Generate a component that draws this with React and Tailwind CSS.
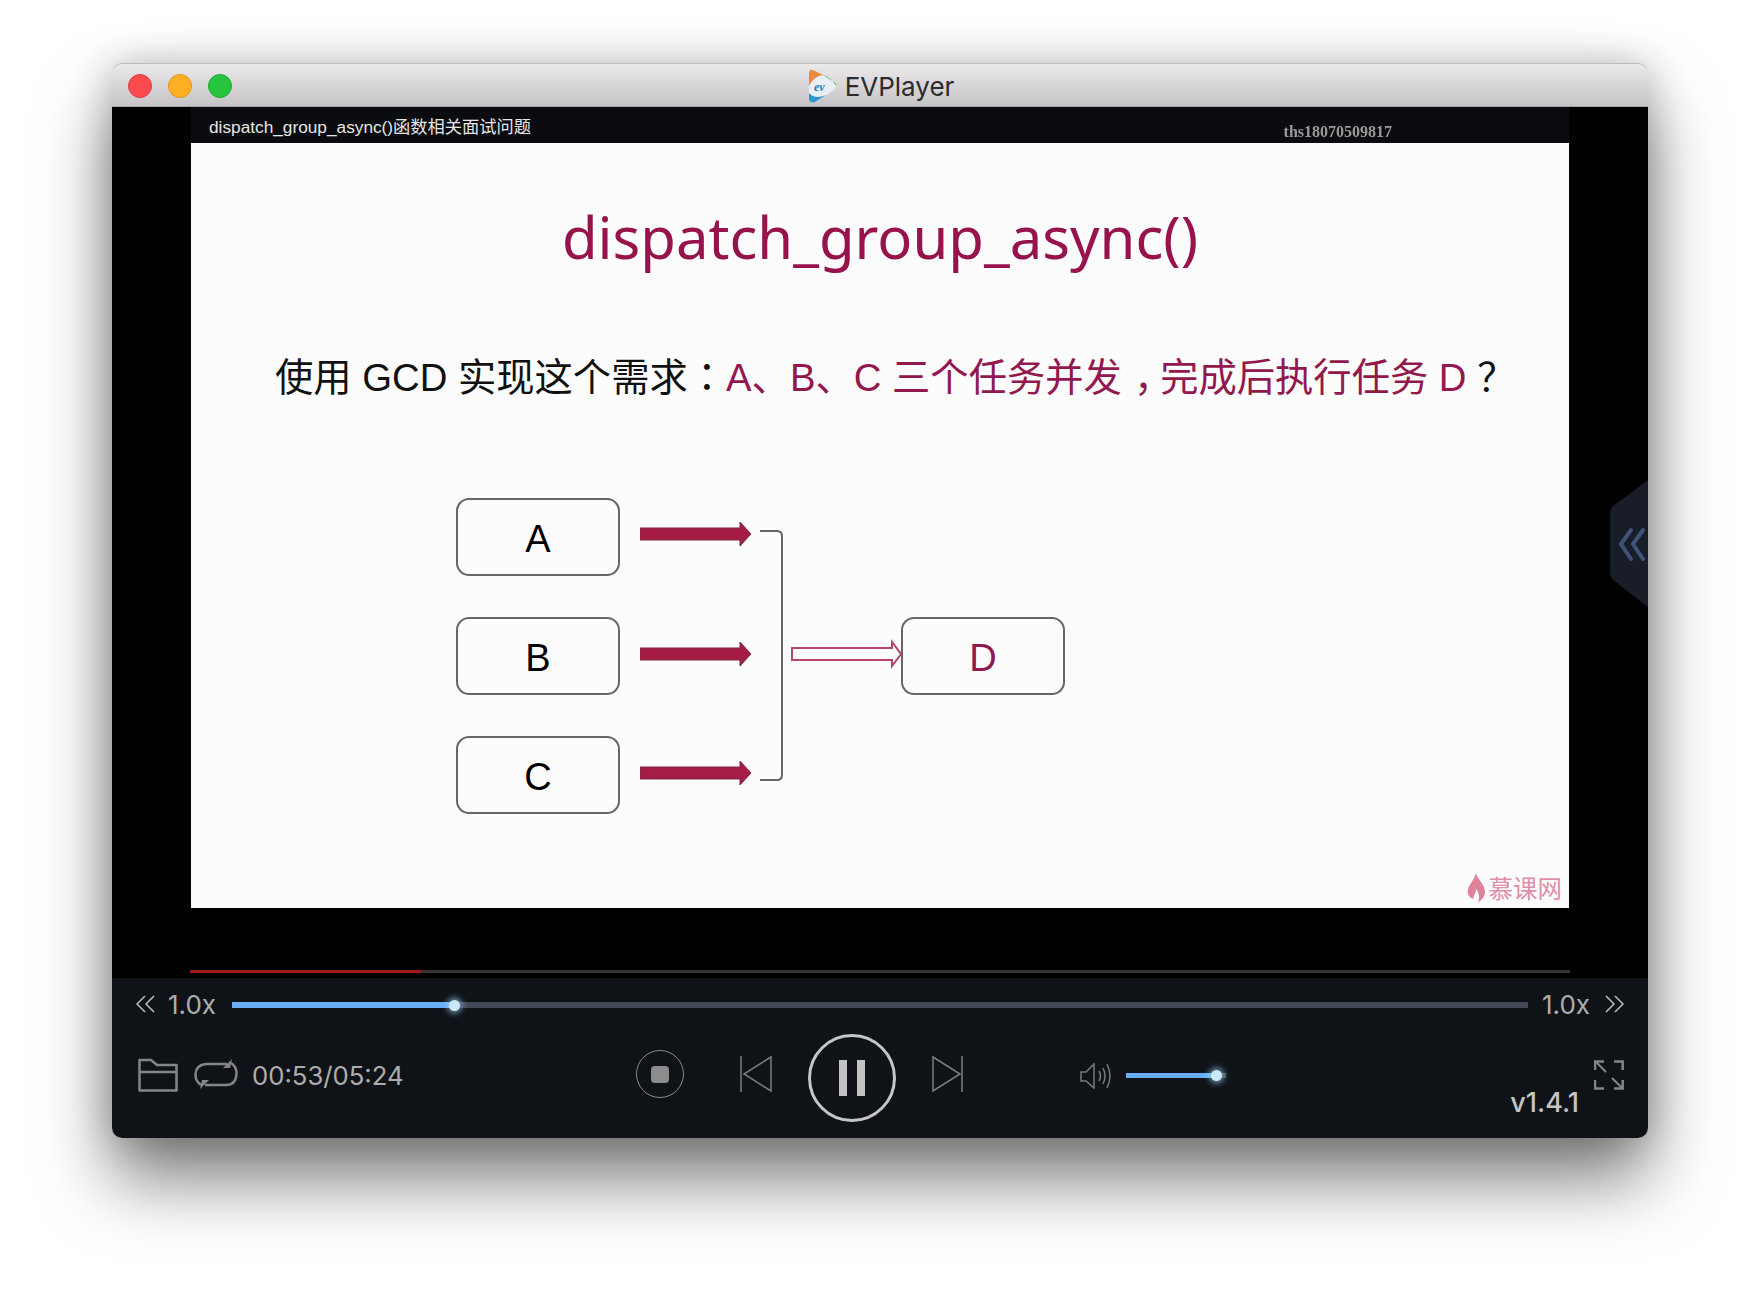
const sansCjk = "font-['Liberation_Sans','Noto_Sans_CJK_SC',sans-serif]";
const wideStop = "font-['Noto_Sans_CJK_TC',sans-serif]";

const TrafficLight = ({ className }) => (
  <span className={`w-[24px] h-[24px] rounded-full border ${className}`} />
);

const AppLogo = () => (
  <svg width="32" height="35" viewBox="0 0 32 35" className="mr-[7px] mt-[2px]">
    <path d="M3 4 Q3 0 7 1 L28 13 Q32 17 28 21 L9 33 Q4 35 3 30 Z" fill="#e9f0f5" />
    <path d="M3 17 L3 4 Q3 0 7 1 L17 6 Q8 7 3 17 Z" fill="#ee8a3c" />
    <path d="M17 6 L28 13 Q31 15 30 17 Q26 9 17 6 Z" fill="#6cbb55" />
    <path d="M3 24 L3 30 Q4 35 9 33 L20 26 Q9 31 3 24 Z" fill="#2d96cf" />
    <text x="8" y="22" fontSize="12" fontStyle="italic" fontWeight="700" fill="#2f7fb8" fontFamily="Liberation Serif, serif">ev</text>
  </svg>
);

const TitleBar = () => (
  <div className="relative h-[44px] flex items-center justify-center rounded-t-[10px] bg-gradient-to-b from-[#ebe9eb] to-[#c6c4c7] border-t border-t-[#bdbbbd] border-b border-b-[#a8a6a8]">
    <div className="absolute left-[16px] top-[10px] flex gap-[16px]">
      <TrafficLight className="bg-[#fc4a4e] border-[#e0383c]" />
      <TrafficLight className="bg-[#fdb024] border-[#df9517]" />
      <TrafficLight className="bg-[#27c63e] border-[#1ea82f]" />
    </div>
    <AppLogo />
    <span className="font-['Inter',sans-serif] text-[26px] leading-none mt-[3px] text-[#2b2b2e]">EVPlayer</span>
  </div>
);

const BlockArrow = ({ y }) => (
  <path d={`M0 ${y - 6} H100 V${y - 12} L111 ${y} L100 ${y + 12} V${y + 6} H0 Z`} fill="#a51c45" stroke="#7d2a47" strokeWidth="1" />
);

const Connectors = () => (
  <svg width="261" height="316" viewBox="0 0 261 316" className="ml-[20px] shrink-0" fill="none">
    <BlockArrow y={36} />
    <BlockArrow y={156} />
    <BlockArrow y={275} />
    <path d="M120 33 H137 Q142 33 142 38 V277 Q142 282 137 282 H120" stroke="#666" strokeWidth="2" />
    <path d="M152 150 H252 V144 L261 156 L252 168 V162 H152 Z" fill="#fdfcfd" stroke="#b8436f" strokeWidth="2" />
  </svg>
);

const DiagramBox = ({ label, className = 'text-black' }) => (
  <div className={`w-[164px] h-[78px] shrink-0 flex items-center justify-center border-2 border-[#666] rounded-[13px] text-[38px] leading-none pt-[4px] ${sansCjk} ${className}`}>
    {label}
  </div>
);

const Slide = () => (
  <div className="h-[765px] bg-[#fdfcfd] flex flex-col relative overflow-hidden">
    <h1 className="mt-[50px] text-center font-['Noto_Sans',sans-serif] text-[58px] leading-[88px] text-[#97134b]">
      dispatch_group_async()
    </h1>
    <p className={`mt-[58px] ml-[84px] text-[38.3px] leading-[72px] whitespace-nowrap text-[#111] ${sansCjk}`}>
      使用 GCD 实现这个需求<span className={wideStop}>：</span>
      <span className="text-[#92184d]">
        A、B、C 三个任务并发<span className="ml-[0.32em] tracking-[-0.32em]">，</span>完成后执行任务 D{' '}
      </span>
      ？
    </p>
    <div className="mt-[84px] ml-[265px] flex items-start">
      <div className="flex flex-col gap-[41px]">
        <DiagramBox label="A" />
        <DiagramBox label="B" />
        <DiagramBox label="C" />
      </div>
      <Connectors />
      <div className="mt-[119px]">
        <DiagramBox label="D" className="text-[#92184d]" />
      </div>
    </div>
    <div className="absolute right-[7px] bottom-[5px] flex items-center gap-[3px]">
      <svg width="19" height="30" viewBox="0 0 19 30">
        <path d="M9 0 C10 6 18 11 18 19 C18 24 14 27 11 30 C13 24 12 20 9 16 C9 20 7 22 6 26 C2 24 0 21 1 16 C2 12 7 7 9 0 Z" fill="#e0839c" />
      </svg>
      <span className="font-['Noto_Sans_CJK_SC',sans-serif] text-[24.5px] leading-[30px] text-[#e08fa8]">慕课网</span>
    </div>
  </div>
);

const SideHandle = () => (
  <div className="absolute right-0 top-[373px]">
    <svg width="38" height="127" viewBox="0 0 38 127">
      <path d="M38 0 L3 26 Q0 29 0 33 V93 Q0 97 3 100 L38 127 Z" fill="#181d28" />
      <path d="M21 50 L11 64 L21 79 M33 50 L23 64 L33 79" stroke="#3f5278" strokeWidth="4" strokeLinecap="round" fill="none" />
    </svg>
  </div>
);

const VideoArea = () => (
  <div className="relative h-[871px] bg-black px-[79px]">
    <div className="h-[36px] bg-[#0b0c0f] flex items-center justify-between pl-[18px] pr-[177px]">
      <span className={`text-[17.25px] leading-none mt-[5px] text-[#e6e6e6] ${sansCjk}`}>dispatch_group_async()函数相关面试问题</span>
      <span className="font-['Liberation_Serif',serif] font-bold text-[16px] leading-none mt-[14px] text-[#9a9a9a] blur-[0.5px]">ths18070509817</span>
    </div>
    <Slide />
    <div className="mt-[62px] h-[3px] -mx-[1px] bg-[#333] flex">
      <div className="w-[231px] bg-[#9e1b1b]" />
    </div>
    <SideHandle />
  </div>
);

const Chevrons = ({ dir }) => (
  <svg width="19" height="18" viewBox="0 0 19 18" fill="none" stroke="#bdbdbd" strokeWidth="1.5" className="shrink-0 mb-[2px]">
    {dir === 'left'
      ? <path d="M9 1 L1 9 L9 17 M18 1 L10 9 L18 17" />
      : <path d="M1 1 L9 9 L1 17 M10 1 L18 9 L10 17" />}
  </svg>
);

const ControlText = ({ children, className = '' }) => (
  <span className={`font-['Inter',sans-serif] text-[26px] leading-none whitespace-nowrap text-[#adadad] ${className}`}>{children}</span>
);

const Slider = ({ percent, className = '' }) => (
  <div className={`relative h-[6px] bg-[#434858] ${className}`}>
    <div className="h-full bg-[#69aef5]" style={{ width: `${percent}%` }} />
    <span
      className="absolute top-1/2 w-[11px] h-[11px] -ml-[5px] -mt-[5.5px] rounded-full bg-[#cbe9fb] shadow-[0_0_6px_2px_rgba(160,215,250,0.7)]"
      style={{ left: `${percent}%` }}
    />
  </div>
);

const Controls = () => (
  <div className="h-[160px] bg-[#0f1318] rounded-b-[10px]">
    <div className="h-[54px] px-[24px] flex items-center">
      <Chevrons dir="left" />
      <ControlText className="ml-[13px]">1.0x</ControlText>
      <Slider percent={17.1} className="flex-1 ml-[16px] mr-[14px]" />
      <ControlText>1.0x</ControlText>
      <div className="ml-[15px]"><Chevrons dir="right" /></div>
    </div>
    <div className="mt-[2px] h-[88px] pl-[26px] pr-[24px] flex items-start">
      <svg width="40" height="34" viewBox="0 0 40 34" fill="none" stroke="#858585" strokeWidth="2.5" className="mt-[24px] shrink-0">
        <path d="M1.5 32.5 V2 H13 L19 7 H38.5 V32.5 Z M1.5 14 H38.5" strokeLinejoin="round" />
      </svg>
      <svg width="44" height="30" viewBox="0 0 44 30" fill="none" stroke="#858585" strokeWidth="2.5" className="ml-[16px] mt-[25px] shrink-0">
        <path d="M7 26 Q1 22 1.5 15 Q2 6 12 5 H33" />
        <path d="M37 4 Q43 8 42.5 15 Q42 26 32 26 H11" />
        <path d="M29 9 L38 0 L36 9 Z M15 21 L6 30 L8 21 Z" fill="#858585" stroke="none" />
      </svg>
      <ControlText className="ml-[14px] mt-[29px] w-[152px] text-[25.7px]!">00:53/05:24</ControlText>
      <div className="ml-[232px] mt-[16px] w-[48px] h-[48px] rounded-full border border-[#8a8a8a] flex items-center justify-center shrink-0">
        <span className="w-[18px] h-[17px] rounded-[4px] bg-[#8c8c8c]" />
      </div>
      <svg width="32" height="36" viewBox="0 0 32 36" fill="none" stroke="#7e7e7e" strokeWidth="1.5" className="ml-[56px] mt-[22px] shrink-0">
        <path d="M1 0 V36 M31 1 L4 18 L31 35 Z" />
      </svg>
      <div className="ml-[36px] w-[88px] h-[88px] rounded-full border-[3px] border-[#c6c6c6] flex items-center justify-center gap-[10px] shrink-0">
        <span className="w-[8px] h-[36px] bg-[#c4c4c4]" />
        <span className="w-[8px] h-[36px] bg-[#c4c4c4]" />
      </div>
      <svg width="31" height="36" viewBox="0 0 31 36" fill="none" stroke="#7e7e7e" strokeWidth="1.5" className="ml-[36px] mt-[22px] shrink-0">
        <path d="M30 0 V36 M1 1 L28 18 L1 35 Z" />
      </svg>
      <svg width="32" height="26" viewBox="0 0 32 26" fill="none" stroke="#7a7a7a" strokeWidth="1.5" className="ml-[117px] mt-[29px] shrink-0">
        <path d="M1 9 H6 L14 1 V25 L6 18 H1 Z" />
        <path d="M19 8 Q22 13 19 18 M23 5 Q27 13 23 21 M27 1 Q33 13 27 25" />
      </svg>
      <Slider percent={90} className="ml-[14px] mt-[39px] w-[100px] h-[5px]! bg-[#2a2e37]" />
      <ControlText className="ml-auto mt-[55px] font-medium text-[27px]! text-[#c4c4c4]!">v1.4.1</ControlText>
      <svg width="30" height="30" viewBox="0 0 30 30" fill="none" stroke="#858585" strokeWidth="2.5" className="ml-[15px] mt-[26px] shrink-0">
        <path d="M1 10 V1.5 H10 M20 1.5 H28.7 V10 M1 20 V28.5 H10 M20 28.5 H28.7 V20" />
        <path d="M2 2 L12 12 M28 28 L18 18" strokeWidth="2" />
      </svg>
    </div>
  </div>
);

export default function App() {
  return (
    <div className="w-[1760px] h-[1298px] bg-white overflow-hidden pt-[63px] pl-[112px]">
      <div className="w-[1536px] rounded-[10px] shadow-[0_42px_70px_rgba(0,0,0,0.5),0_0_40px_rgba(0,0,0,0.22)]">
        <TitleBar />
        <VideoArea />
        <Controls />
      </div>
    </div>
  );
}
